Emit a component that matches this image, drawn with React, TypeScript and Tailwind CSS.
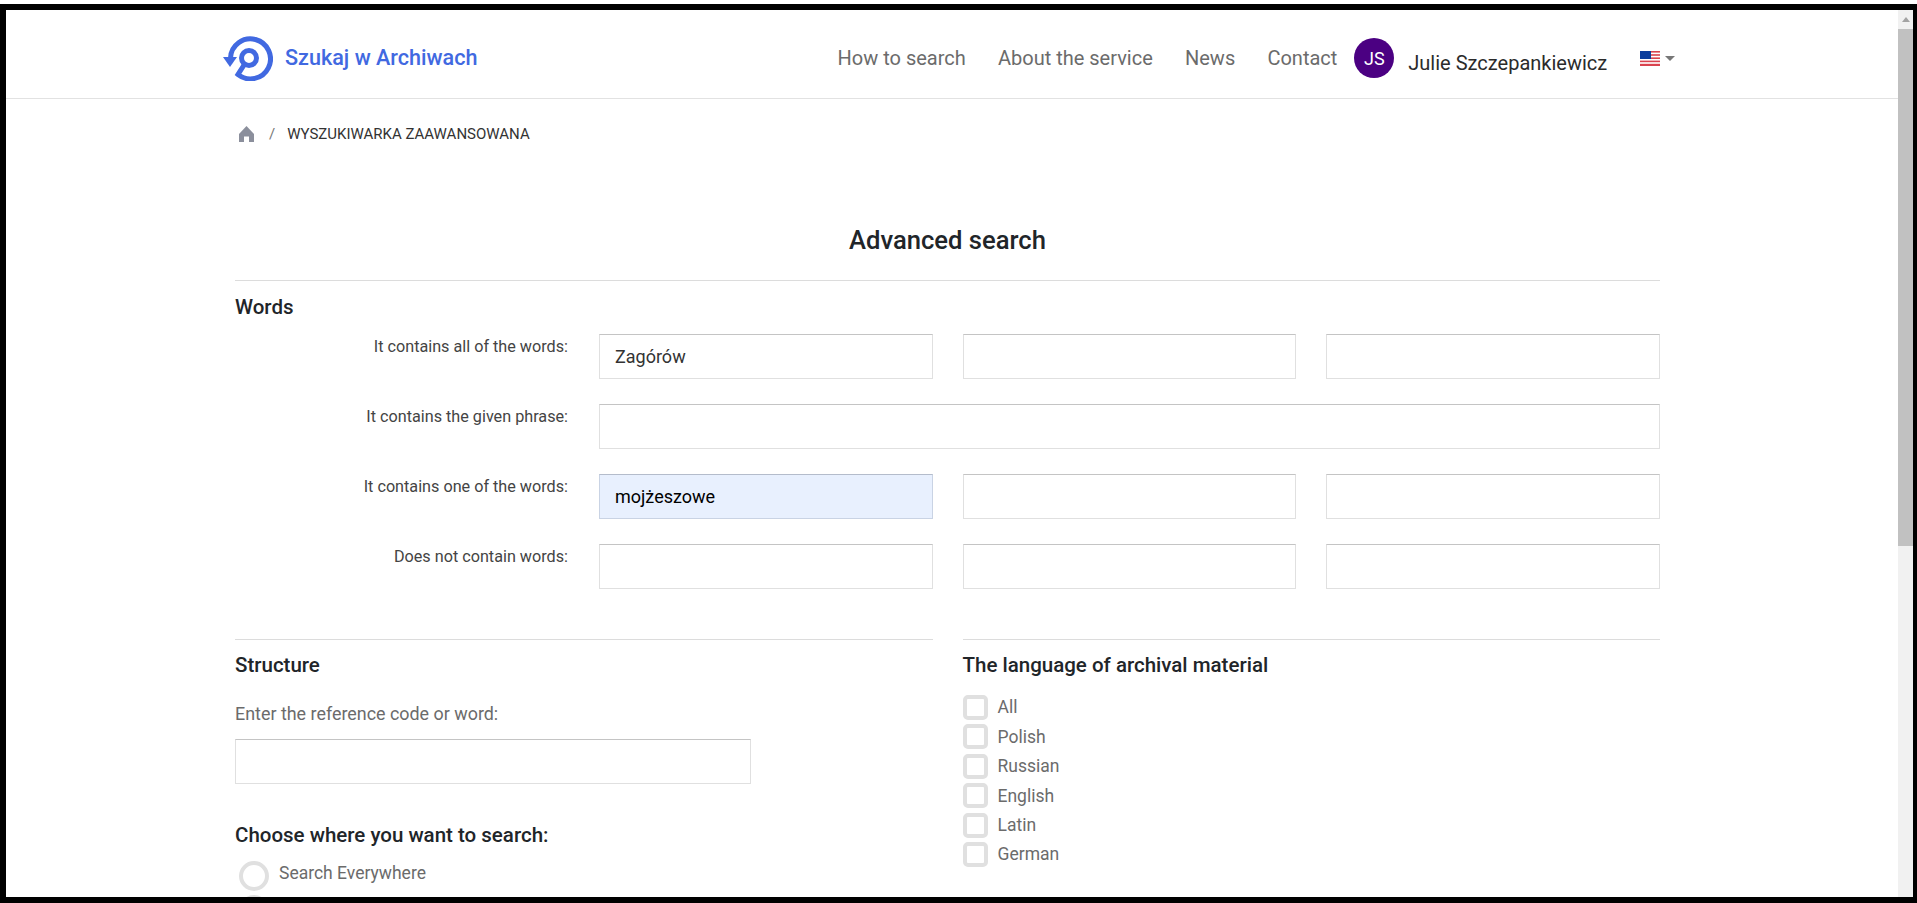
import React from 'react';

const font = { fontFamily: 'Roboto, sans-serif' };

function Logo() {
  return (
    <svg width="50" height="45" viewBox="0 0 50 45" fill="none" className="shrink-0">
      <path d="M7.5 22 A20 20 0 1 1 15 38.5 L21 29" stroke="#4169e1" strokeWidth="5" />
      <circle cx="26" cy="22" r="7.5" stroke="#4169e1" strokeWidth="5" />
      <path d="M0 21 H14 L7 31 Z" fill="#4169e1" />
    </svg>
  );
}

function Flag() {
  return (
    <svg width="20" height="15" viewBox="0 0 20 15">
      <rect width="20" height="15" fill="#fff" />
      <rect y="0" width="20" height="1.6" fill="#d9434e" />
      <rect y="3.2" width="20" height="1.6" fill="#d9434e" />
      <rect y="6.4" width="20" height="1.6" fill="#d9434e" />
      <rect y="9.6" width="20" height="1.6" fill="#d9434e" />
      <rect y="12.8" width="20" height="2.2" fill="#d9434e" />
      <rect width="11" height="8" fill="#0a3d9c" />
    </svg>
  );
}

function Field({ value, filled }: { value?: string; filled?: boolean }) {
  return (
    <input
      readOnly
      defaultValue={value}
      className={
        'h-[45px] w-full border px-[15px] text-[18px] outline-none ' +
        (filled
          ? 'border-[#c9d3e4] border-t-[#b4bccb] bg-[#e8f0fe] text-black'
          : 'border-[#e0e0e0] border-t-[#c4c4c4] bg-white text-[#333]')
      }
    />
  );
}

function Row({ label, children }: { label: string; children: React.ReactNode }) {
  return (
    <div className="flex">
      <label className="w-[364px] shrink-0 pr-[31px] pt-[1px] text-right text-[16.2px] leading-[24px] text-[#444]">
        {label}
      </label>
      <div className="grid flex-1 grid-cols-3 gap-[30px]">{children}</div>
    </div>
  );
}

const languages = ['All', 'Polish', 'Russian', 'English', 'Latin', 'German'];
const nav = ['How to search', 'About the service', 'News', 'Contact'];

export default function App() {
  return (
    <div className="h-[903px] bg-white pt-[4px]" style={font}>
      <div className="flex h-[899px] overflow-hidden border-b-[6px] border-l-[6px] border-r-[4px] border-t-[6px] border-black">
        <div className="min-w-0 flex-1">
          <header className="flex h-[89px] items-center border-b border-[#e2e2e2] pl-[217px] pt-[8px]">
            <div className="flex items-center gap-[12px]">
              <Logo />
              <span className="text-[21.6px] font-medium text-[#4169e1]">Szukaj w Archiwach</span>
            </div>
            <nav className="ml-[360px] flex items-center gap-[32.2px] text-[20px] text-[#6b6b6b]">
              {nav.map((n) => (
                <a key={n}>{n}</a>
              ))}
            </nav>
            <div className="ml-[17px] flex h-[40px] w-[40px] items-center justify-center rounded-full bg-[#4b0082] text-[18px] text-white">
              JS
            </div>
            <span className="ml-[14px] mt-[10px] text-[20px] text-[#2b2b2b]">Julie Szczepankiewicz</span>
            <div className="ml-[33px] flex items-center gap-[5px]">
              <Flag />
              <span className="h-0 w-0 border-x-[5px] border-t-[5px] border-x-transparent border-t-[#777]" />
            </div>
          </header>

          <div className="w-[1425px] ml-[229px]">
            <div className="mt-[25px] flex h-[20px] items-center text-[15px] text-[#333]">
              <svg width="15" height="16" viewBox="0 0 15 16" className="ml-[4px]">
                <path d="M7.5 0 L15 8 V16 H10 V10.5 H5 V16 H0 V8 Z" fill="#8b8f9c" />
              </svg>
              <span className="ml-[15px] text-[#777]">/</span>
              <span className="ml-[12px] uppercase">Wyszukiwarka zaawansowana</span>
            </div>

            <h1 className="mt-[81px] text-center text-[25.6px] font-medium leading-[30px] text-[#212529]">
              Advanced search
            </h1>
            <div className="mt-[25px] border-t border-[#dcdcdc]" />

            <h2 className="mt-[14px] text-[20.5px] font-medium leading-[24px] text-[#212529]">Words</h2>

            <div className="mt-[15px] flex flex-col gap-[25px]">
              <Row label="It contains all of the words:">
                <Field value="Zagórów" />
                <Field />
                <Field />
              </Row>
              <Row label="It contains the given phrase:">
                <div className="col-span-3">
                  <Field />
                </div>
              </Row>
              <Row label="It contains one of the words:">
                <Field value="mojżeszowe" filled />
                <Field />
                <Field />
              </Row>
              <Row label="Does not contain words:">
                <Field />
                <Field />
                <Field />
              </Row>
            </div>

            <div className="mt-[50px] grid grid-cols-2 gap-[30px]">
              <section className="border-t border-[#dcdcdc]">
                <h2 className="mt-[13px] text-[20.5px] font-medium leading-[24px] text-[#212529]">Structure</h2>
                <p className="mt-[25px] text-[17.9px] leading-[24px] text-[#6b6b6b]">Enter the reference code or word:</p>
                <div className="mt-[13px] w-[516px]">
                  <Field />
                </div>
                <h2 className="mt-[39px] text-[20.5px] font-medium leading-[24px] text-[#212529]">
                  Choose where you want to search:
                </h2>
                <div className="ml-[4px] mt-[14px] flex flex-col gap-[4px]">
                  {['Search Everywhere', 'Select units'].map((t) => (
                    <div key={t} className="flex items-start gap-[10px]">
                      <span className="h-[30px] w-[30px] rounded-full border-[4px] border-[#e0e0e0]" />
                      <span className="pt-[1px] text-[17.5px] leading-[22px] text-[#6b6b6b]">{t}</span>
                    </div>
                  ))}
                </div>
              </section>
              <section className="border-t border-[#dcdcdc]">
                <h2 className="mt-[13px] text-[20.5px] font-medium leading-[24px] text-[#212529]">
                  The language of archival material
                </h2>
                <div className="mt-[18px] flex flex-col gap-[4.4px]">
                  {languages.map((l) => (
                    <label key={l} className="flex h-[25px] items-center gap-[10px] text-[17.5px] text-[#6b6b6b]">
                      <span className="h-[25px] w-[25px] rounded-[5px] border-[4px] border-[#e0e0e0]" />
                      {l}
                    </label>
                  ))}
                </div>
              </section>
            </div>
          </div>
        </div>

        <div className="flex w-[15px] shrink-0 flex-col bg-[#f1f1f1]">
          <div className="flex h-[19px] items-center justify-center bg-[#f1f1f1]">
            <span className="h-0 w-0 border-x-[4px] border-b-[5px] border-x-transparent border-b-[#a3a3a3]" />
          </div>
          <div className="h-[517px] bg-[#c1c1c1]" />
        </div>
      </div>
    </div>
  );
}
